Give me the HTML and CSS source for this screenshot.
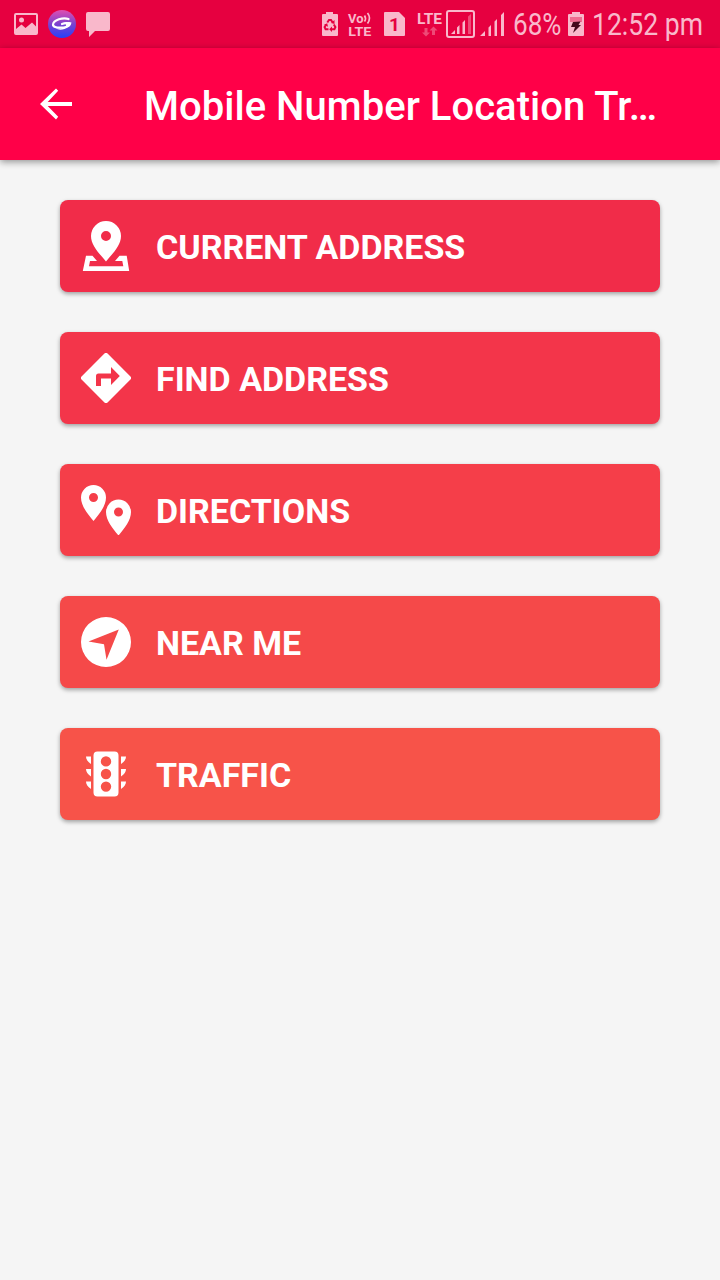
FILE: index.html
```html
<!DOCTYPE html>
<html lang="en">
<head>
    <meta charset="UTF-8">
    <meta name="viewport" content="width=device-width, initial-scale=1.0">
    <title>Mobile Number Location Tracker</title>
    <link rel="stylesheet" href="styles.css">
</head>
<body>
    <!-- phone status bar -->
    <div class="status-bar">
        <div class="notifications">
            <svg width="24" height="22" viewBox="0 0 24 22">
                <path fill-rule="evenodd" d="M2 0h20a2 2 0 0 1 2 2v18a2 2 0 0 1-2 2H2a2 2 0 0 1-2-2V2a2 2 0 0 1 2-2zM2 2v14l5.500-4.500 4 3.500 6.500-5.500 4 4V2z"/>
                <circle cx="7.500" cy="7" r="2.500"/>
            </svg>
            <svg width="28" height="28" viewBox="0 0 28 28">
                <defs>
                    <linearGradient id="badge" x1="0" y1="0" x2="0" y2="1">
                        <stop offset="0" stop-color="#e04fb0"/>
                        <stop offset="0.5" stop-color="#7c42cf"/>
                        <stop offset="1" stop-color="#2440fa"/>
                    </linearGradient>
                </defs>
                <circle cx="14" cy="14" r="14" fill="url(#badge)"/>
                <path d="M20.500 9C15 7 5.500 10 5 14.500c-.3 4.500 15 4 15.500-.5.200-1.500-4-1-6.500 0" fill="none" stroke="#fff" stroke-width="2.200" stroke-linecap="round"/>
                <path d="M16 13q5-1.500 7.500-.5-.5 4.500-7 6.500-5 1.500-9-.5 7 .5 10-2 2-2-1.500-3.500z" fill="#fff"/>
            </svg>
            <svg width="24" height="25" viewBox="0 0 24 25">
                <path d="M2 0h20a2 2 0 0 1 2 2v15a2 2 0 0 1-2 2H9l-6 6v-6H2a2 2 0 0 1-2-2V2a2 2 0 0 1 2-2z"/>
            </svg>
        </div>
        <div class="system">
            <svg class="saver" width="16" height="24" viewBox="0 0 16 24">
                <path d="M4 0h7v2h4a1 1 0 0 1 1 1v20a1 1 0 0 1-1 1H1a1 1 0 0 1-1-1V3a1 1 0 0 1 1-1h3z"/>
                <path class="recycle" d="M5.300 10.500L7 8h2l1.700 2.500M11.800 12.500L13.400 15l-1 2.200H9M6.500 17.200H3.600l-1-2.200 1.600-2.500"/>
                <path class="tips" d="M9 11l3.500 1V8zM10 14.500V20l-2.800-2.800zM2 12.800l3.200-1.500.8 3.500z"/>
            </svg>
            <svg class="volte" width="24" height="26" viewBox="0 0 24 26">
                <text x="0" y="11.7" textLength="15.500" lengthAdjust="spacingAndGlyphs">Vo</text>
                <path class="waves" d="M16.500 4.500q2 3 0 6M19.500 2q4 5 0 10.500"/>
                <text x="0.3" y="24.8" textLength="23" lengthAdjust="spacingAndGlyphs">LTE</text>
            </svg>
            <svg class="sim" width="21" height="24" viewBox="0 0 21 24">
                <path d="M1 0h14l6 6v17a1 1 0 0 1-1 1H1a1 1 0 0 1-1-1V1a1 1 0 0 1 1-1z"/>
                <text x="5" y="19">1</text>
            </svg>
            <svg class="lte" width="26" height="26" viewBox="0 0 26 26">
                <text x="0" y="12.700" textLength="25" lengthAdjust="spacingAndGlyphs">LTE</text>
                <path class="idle" d="M7.500 17h3v4.500H13L9 25.500l-4-4h2.500zM15 24v-4.500h-2.500l4-4 4 4H18V24z"/>
            </svg>
            <svg class="signal-box" width="29" height="28" viewBox="0 0 29 28">
                <rect x="1" y="1" width="27" height="26" rx="2"/>
                <path d="M5 24l4-4v4zM11 17.500l2.500-2.500v9H11zM16.500 12.500L19 10v14h-2.500z"/>
                <path class="idle" d="M22 6.500L25 4v20h-3z"/>
            </svg>
            <svg class="signal" width="24" height="24" viewBox="0 0 24 24">
                <path d="M0 24l5-5v5zM8.500 15.500L11 13v11H8.500zM14.500 9.500L17 7v17h-2.500zM21 3l3-3v24h-3z"/>
            </svg>
            <svg class="percent" width="48" height="40" viewBox="0 0 48 40">
                <text x="0" y="31" textLength="48.500" lengthAdjust="spacingAndGlyphs">68%</text>
            </svg>
            <svg class="battery" width="16" height="24" viewBox="0 0 16 24">
                <path d="M4 0h8v2h3a1 1 0 0 1 1 1v20a1 1 0 0 1-1 1H1a1 1 0 0 1-1-1V3a1 1 0 0 1 1-1h3z"/>
                <path class="drained" d="M2 5h12v5H2z"/>
                <path class="bolt" d="M5 10l7.500-.5-2 3.500H13L5 21l2-6H3z"/>
            </svg>
            <svg class="clock" width="111" height="40" viewBox="0 0 111 40">
                <text x="-1" y="31" textLength="111" lengthAdjust="spacingAndGlyphs">12:52 pm</text>
            </svg>
        </div>
    </div>

    <header class="toolbar">
        <svg class="back" width="32" height="32" viewBox="0 0 32 32">
            <path d="M32 14v4H7.700l10.500 10.700L16 31.500 0 16 16 .5l2.200 2.300L7.700 14z"/>
        </svg>
        <h1>Mobile Number Location Tr…</h1>
    </header>

    <main class="menu">
        <button class="item current">
            <svg width="50" height="50" viewBox="0 0 50 50">
                <path fill-rule="evenodd" d="M25 0a15 15 0 0 1 15 15c0 10-9 18-15 25.500C19 33 10 25 10 15A15 15 0 0 1 25 0zM25 10a5 5 0 1 0 0 10 5 5 0 0 0 0-10z"/>
                <path d="M5 34.700h6.500L16 40H9l-1 5.200h34.300l-1-5.200H34l4.500-5.300h7.200L48.200 50H1.800z"/>
            </svg>
            <span>CURRENT ADDRESS</span>
        </button>
        <button class="item find">
            <svg width="50" height="50" viewBox="0 0 50 50">
                <path fill-rule="evenodd" d="M23.200.8a2.500 2.500 0 0 1 3.600 0l22.400 22.400a2.500 2.500 0 0 1 0 3.600L26.800 49.200a2.500 2.500 0 0 1-3.600 0L.8 26.800a2.500 2.500 0 0 1 0-3.600zM30 14v6.500H17.500a2.500 2.500 0 0 0-2.500 2.500v10h5v-7.500h10V32l8.800-9z"/>
            </svg>
            <span>FIND ADDRESS</span>
        </button>
        <button class="item directions">
            <svg width="50" height="50" viewBox="0 0 50 50">
                <path fill-rule="evenodd" d="M12.500 0A12.500 12.500 0 0 1 25 12.500C25 21 18 29.500 12.500 36 7 29.500 0 21 0 12.500A12.500 12.500 0 0 1 12.500 0zm0 8a4.500 4.500 0 1 0 0 9 4.500 4.500 0 0 0 0-9z"/>
                <path fill-rule="evenodd" d="M37.500 14.500A12.500 12.500 0 0 1 50 27c0 8.500-7 17-12.500 23.500C32 44 25 35.500 25 27a12.500 12.500 0 0 1 12.500-12.500zm0 8a4.500 4.500 0 1 0 0 9 4.500 4.500 0 0 0 0-9z"/>
            </svg>
            <span>DIRECTIONS</span>
        </button>
        <button class="item near">
            <svg width="50" height="50" viewBox="0 0 50 50">
                <path fill-rule="evenodd" d="M25 0a25 25 0 1 1 0 50 25 25 0 0 1 0-50zM37.800 12.500L7.500 24.500 23 27.200l2.500 15.500z"/>
            </svg>
            <span>NEAR ME</span>
        </button>
        <button class="item traffic">
            <svg width="50" height="50" viewBox="0 0 50 50">
                <path fill-rule="evenodd" d="M16.500 2.500h17a4 4 0 0 1 4 4v37a4 4 0 0 1-4 4h-17a4 4 0 0 1-4-4v-37a4 4 0 0 1 4-4zM25 7.200a5.200 5.200 0 1 0 0 10.400 5.200 5.200 0 0 0 0-10.400zM25 19.800a5.200 5.200 0 1 0 0 10.400 5.200 5.200 0 0 0 0-10.400zM25 32.400a5.200 5.200 0 1 0 0 10.400 5.200 5.200 0 0 0 0-10.400z"/>
                <path d="M5 7.500h5V15q-5-3.500-5-7.500zM5 20h5v7.500Q5 24 5 20zM5 32.500h5V40q-5-3.500-5-7.500zM45 7.500h-5V15q5-3.500 5-7.500zM45 20h-5v7.500q5-3.500 5-7.500zM45 32.500h-5V40q5-3.500 5-7.500z"/>
            </svg>
            <span>TRAFFIC</span>
        </button>
    </main>
</body>
</html>
```

FILE: styles.css
```css
body {
    font-family: Roboto, sans-serif;
    background-color: #f5f5f5;
    margin: 0;
    min-height: 100vh;
}

.status-bar {
    display: flex;
    justify-content: space-between;
    box-sizing: border-box;
    height: 48px;
    padding: 0 16px 0 14px;
    background: #e60040;
    fill: #f9b8cb;
}

.status-bar svg {
    overflow: visible;
}

.notifications,
.system {
    display: flex;
    align-items: center;
}

.notifications {
    gap: 10px;
}

.status-bar text {
    font-weight: 700;
}

.saver {
    margin-right: 10px;
}

.saver .recycle {
    fill: none;
    stroke: #e60040;
    stroke-width: 2;
}

.saver .tips,
.sim text {
    fill: #e60040;
}

.volte {
    margin-right: 12px;
}

.volte text {
    font-size: 13px;
}

.lte text {
    font-size: 15px;
}

.volte .waves {
    fill: none;
    stroke: #f9b8cb;
    stroke-width: 1.7;
}

.sim {
    margin-right: 12px;
}

.sim text {
    font-size: 19px;
}

.lte {
    margin-right: 3px;
}

.idle {
    opacity: 0.4;
}

.signal-box {
    margin-right: 5px;
}

.signal-box rect {
    fill: none;
    stroke: #f9b8cb;
    stroke-width: 2;
}

.signal {
    margin-right: 9px;
}

.percent {
    margin-right: 7px;
}

.status-bar .percent text,
.status-bar .clock text {
    font-size: 31px;
    font-weight: 400;
}

.battery {
    margin-right: 9px;
}

.battery .drained {
    fill: #ef6d91;
}

.battery .bolt {
    fill: #45081b;
}

.toolbar {
    display: flex;
    align-items: center;
    height: 112px;
    padding-left: 40px;
    background: #ff0048;
    box-shadow: 0 2px 7px rgba(0, 0, 0, 0.4);
}

.back {
    fill: #fff;
}

.toolbar h1 {
    margin: 4px 0 0 72px;
    color: #fff;
    font-size: 40px;
    font-weight: 500;
    letter-spacing: 0.03px;
    white-space: nowrap;
}

.menu {
    display: flex;
    flex-direction: column;
    gap: 40px;
    padding: 40px 60px;
}

.item {
    display: flex;
    align-items: center;
    gap: 25px;
    height: 92px;
    padding: 0 21px;
    border: none;
    border-radius: 8px;
    box-shadow: 0 2px 4px rgba(0, 0, 0, 0.35);
    color: #fff;
    fill: #fff;
    font-family: inherit;
    font-size: 34px;
    font-weight: 700;
    cursor: pointer;
}

.item span {
    padding-top: 2px;
}

.current {
    background: #f12c49;
}

.find {
    background: #f3354a;
}

.directions {
    background: #f53e49;
}

.near {
    background: #f54949;
}

.traffic {
    background: #f75349;
}
```
